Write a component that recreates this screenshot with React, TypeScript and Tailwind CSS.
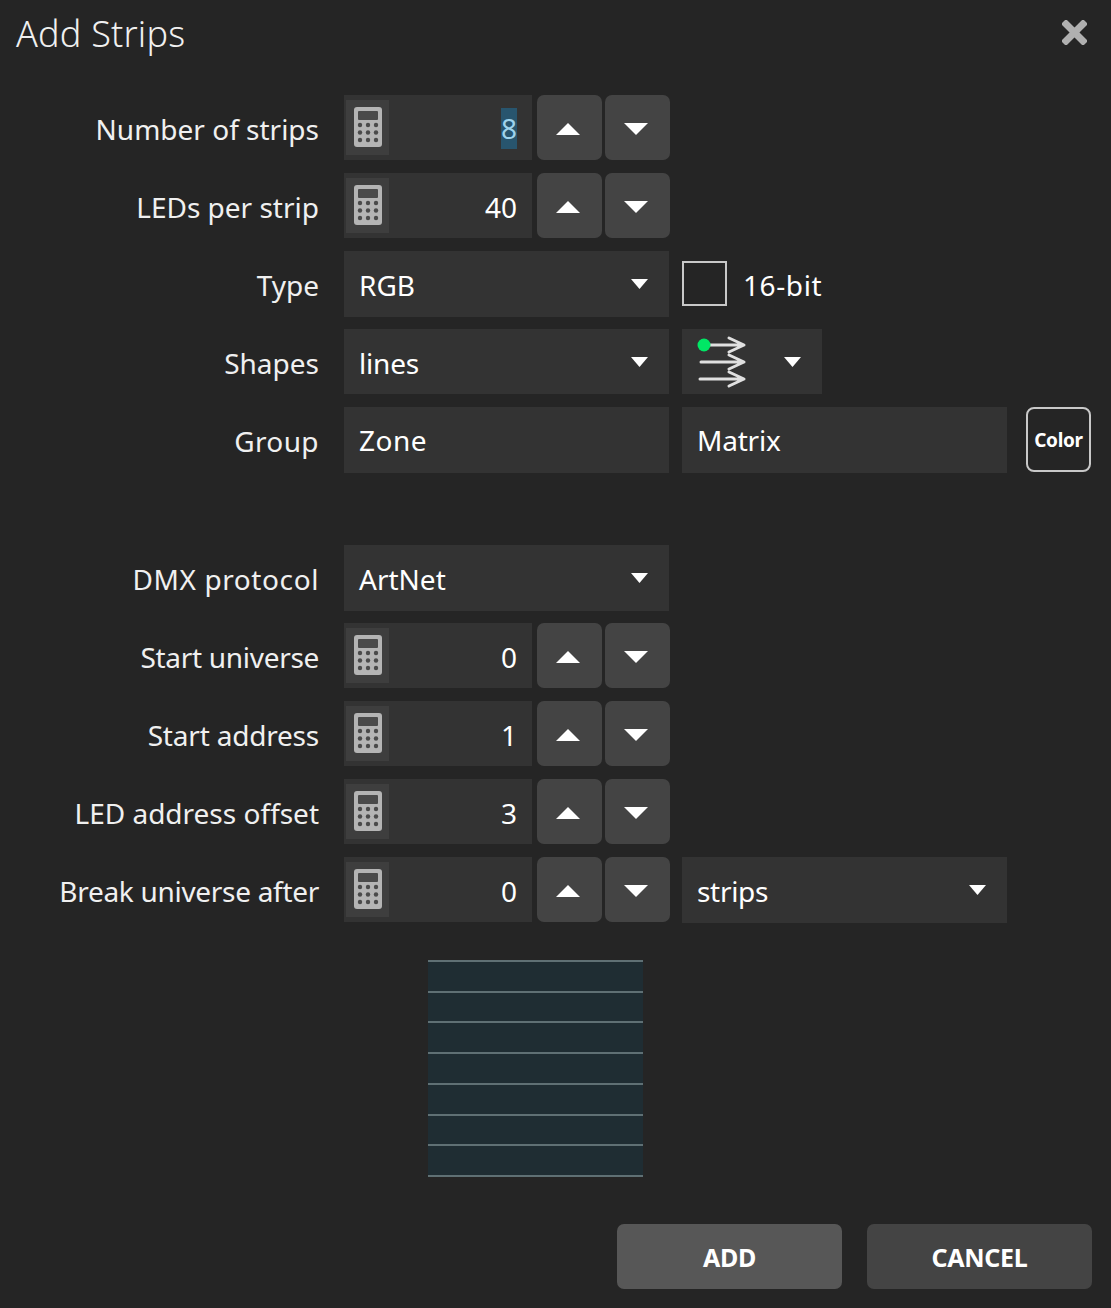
import React from 'react';

const font = { fontFamily: '"Noto Sans", "Open Sans", sans-serif' };

const CalcIcon = () => (
  <svg width="28" height="40" viewBox="0 0 28 40">
    <rect x="0" y="0" width="28" height="40" rx="3" fill="#b4b4b4" />
    <rect x="4" y="4" width="20" height="9" rx="1" fill="#4a4a4a" />
    {[18, 25.5, 33].map((cy) =>
      [6, 14, 22].map((cx) => <circle key={`${cx}-${cy}`} cx={cx} cy={cy} r="2.2" fill="#4a4a4a" />)
    )}
  </svg>
);

const Caret = ({ up }: { up?: boolean }) => (
  <svg width="24" height="12" viewBox="0 0 24 12">
    <polygon points={up ? '12,0 24,12 0,12' : '0,0 24,0 12,12'} fill="#ffffff" />
  </svg>
);

const SmallCaret = () => (
  <svg width="17" height="10" viewBox="0 0 17 10">
    <polygon points="0,0 17,0 8.5,10" fill="#ffffff" />
  </svg>
);

const Row = ({ label, labelClass = 'tracking-normal', children }: { label: string; labelClass?: string; children: React.ReactNode }) => (
  <div className="flex items-start h-[65px]">
    <div className={`w-[319px] h-[65px] flex items-center justify-end pt-[2px] text-[28px] text-[#f0f0f0] shrink-0 ${labelClass}`}>{label}</div>
    <div className="flex items-start ml-[25px]">{children}</div>
  </div>
);

const NumberField = ({ value, selected }: { value: string; selected?: boolean }) => (
  <div className="flex items-center h-[65px]">
    <div className="w-[188px] h-full bg-[#333333] flex items-center justify-between pl-[2px] pr-[15px]">
      <div className="w-[43px] h-[55px] bg-[#3e3e3e] flex items-center justify-center pb-[1px]">
        <CalcIcon />
      </div>
      {selected ? (
        <span className="bg-[#28556e] text-[#9fd3ec] text-[28px] leading-[41px] w-[16px] flex justify-center mt-[1px]">{value}</span>
      ) : (
        <span className="text-white text-[28px] pt-[2px]">{value}</span>
      )}
    </div>
    <button className="ml-[5px] w-[65px] h-full bg-[#444444] rounded-[7px] flex items-center justify-center pr-[4px] pt-[2px]">
      <Caret up />
    </button>
    <button className="ml-[3px] w-[65px] h-full bg-[#444444] rounded-[7px] flex items-center justify-center pr-[4px] pt-[2px]">
      <Caret />
    </button>
  </div>
);

const SelectField = ({ value, short, textClass = 'tracking-normal' }: { value: string; short?: boolean; textClass?: string }) => (
  <div className={`w-[325px] ${short ? 'h-[65px]' : 'h-[66px]'} bg-[#333333] flex items-center justify-between pl-[15px] pr-[21px] text-[28px] text-white`}>
    <span className={`pt-[2px] ${textClass}`}>{value}</span>
    <SmallCaret />
  </div>
);

const TextField = ({ value, textClass = 'tracking-normal' }: { value: string; textClass?: string }) => (
  <div className={`w-[325px] h-[66px] bg-[#333333] flex items-center pl-[15px] text-[28px] text-white ${textClass}`}>
    {value}
  </div>
);

const ShapeIcon = () => (
  <svg width="52" height="52" viewBox="0 0 52 52" fill="none" stroke="#e0e0e0" strokeWidth="3" strokeLinecap="round" strokeLinejoin="round">
    <path d="M8 9H46M32 2L47 9L32 16" />
    <path d="M4 26H46M32 19L47 26L32 33" />
    <path d="M3 43H46M32 36L47 43L32 50" />
    <circle cx="7" cy="9" r="6.5" fill="#00e765" stroke="none" />
  </svg>
);

export default function App() {
  return (
    <div style={font} className="relative w-[1111px] h-[1308px] bg-[#252525] overflow-hidden">
      <div className="flex items-start justify-between h-[95px] pl-[16px] pr-[24px]">
        <h1 className="text-[36px] font-light text-[#f0f0f0] mt-[7px] tracking-[0.2px]">Add Strips</h1>
        <svg className="mt-[20px]" width="25" height="25" viewBox="0 0 25 25">
          <path d="M4 4L21 21M21 4L4 21" stroke="#b0b0b0" strokeWidth="7" strokeLinecap="square" />
        </svg>
      </div>

      <div className="flex flex-col gap-[13px]">
        <Row label="Number of strips"><NumberField value="8" selected /></Row>
        <Row label="LEDs per strip"><NumberField value="40" /></Row>
        <Row label="Type">
          <SelectField value="RGB" />
          <div className="ml-[13px] mt-[10px] w-[45px] h-[45px] border-2 border-[#c8c8c8]" />
          <span className="ml-[16px] mt-[13px] text-[28px] text-white tracking-[0.6px]">16-bit</span>
        </Row>
        <Row label="Shapes">
          <SelectField value="lines" short textClass="tracking-[-0.2px]" />
          <div className="ml-[13px] w-[140px] h-[65px] bg-[#333333] flex items-center justify-between pl-[15px] pr-[21px]">
            <ShapeIcon />
            <SmallCaret />
          </div>
        </Row>
        <Row label="Group" labelClass="tracking-[0.4px]">
          <TextField value="Zone" textClass="tracking-[0.5px]" />
          <div className="ml-[13px]"><TextField value="Matrix" textClass="tracking-[-0.2px]" /></div>
          <button className="ml-[19px] w-[65px] h-[65px] border-2 border-[#c8c8c8] rounded-[8px] text-white text-[19px] font-bold tracking-[-0.3px] pt-[1px]">Color</button>
        </Row>
      </div>

      <div className="flex flex-col gap-[13px] mt-[73px]">
        <Row label="DMX protocol" labelClass="tracking-[0.6px]"><SelectField value="ArtNet" /></Row>
        <Row label="Start universe" labelClass="tracking-[-0.3px]"><NumberField value="0" /></Row>
        <Row label="Start address" labelClass="tracking-[-0.2px]"><NumberField value="1" /></Row>
        <Row label="LED address offset"><NumberField value="3" /></Row>
        <Row label="Break universe after" labelClass="tracking-[-0.3px]">
          <NumberField value="0" />
          <div className="ml-[12px]"><SelectField value="strips" textClass="tracking-[-0.3px]" /></div>
        </Row>
      </div>

      <div className="ml-[428px] mt-[38px] w-[215px] h-[217px] bg-[#1f2d33] flex flex-col justify-between">
        {[0, 1, 2, 3, 4, 5, 6, 7].map((i) => (
          <div key={i} className="h-[2px] bg-[#5f7074]" />
        ))}
      </div>

      <div className="flex justify-end gap-[25px] mt-[47px] pr-[19px]">
        <button className="w-[225px] h-[65px] rounded-[7px] bg-[#575757] text-white text-[25px] font-bold tracking-[-0.3px] pt-[3px]">ADD</button>
        <button className="w-[225px] h-[65px] rounded-[7px] bg-[#444444] text-white text-[25px] font-bold tracking-[-0.3px] pt-[3px]">CANCEL</button>
      </div>
    </div>
  );
}
